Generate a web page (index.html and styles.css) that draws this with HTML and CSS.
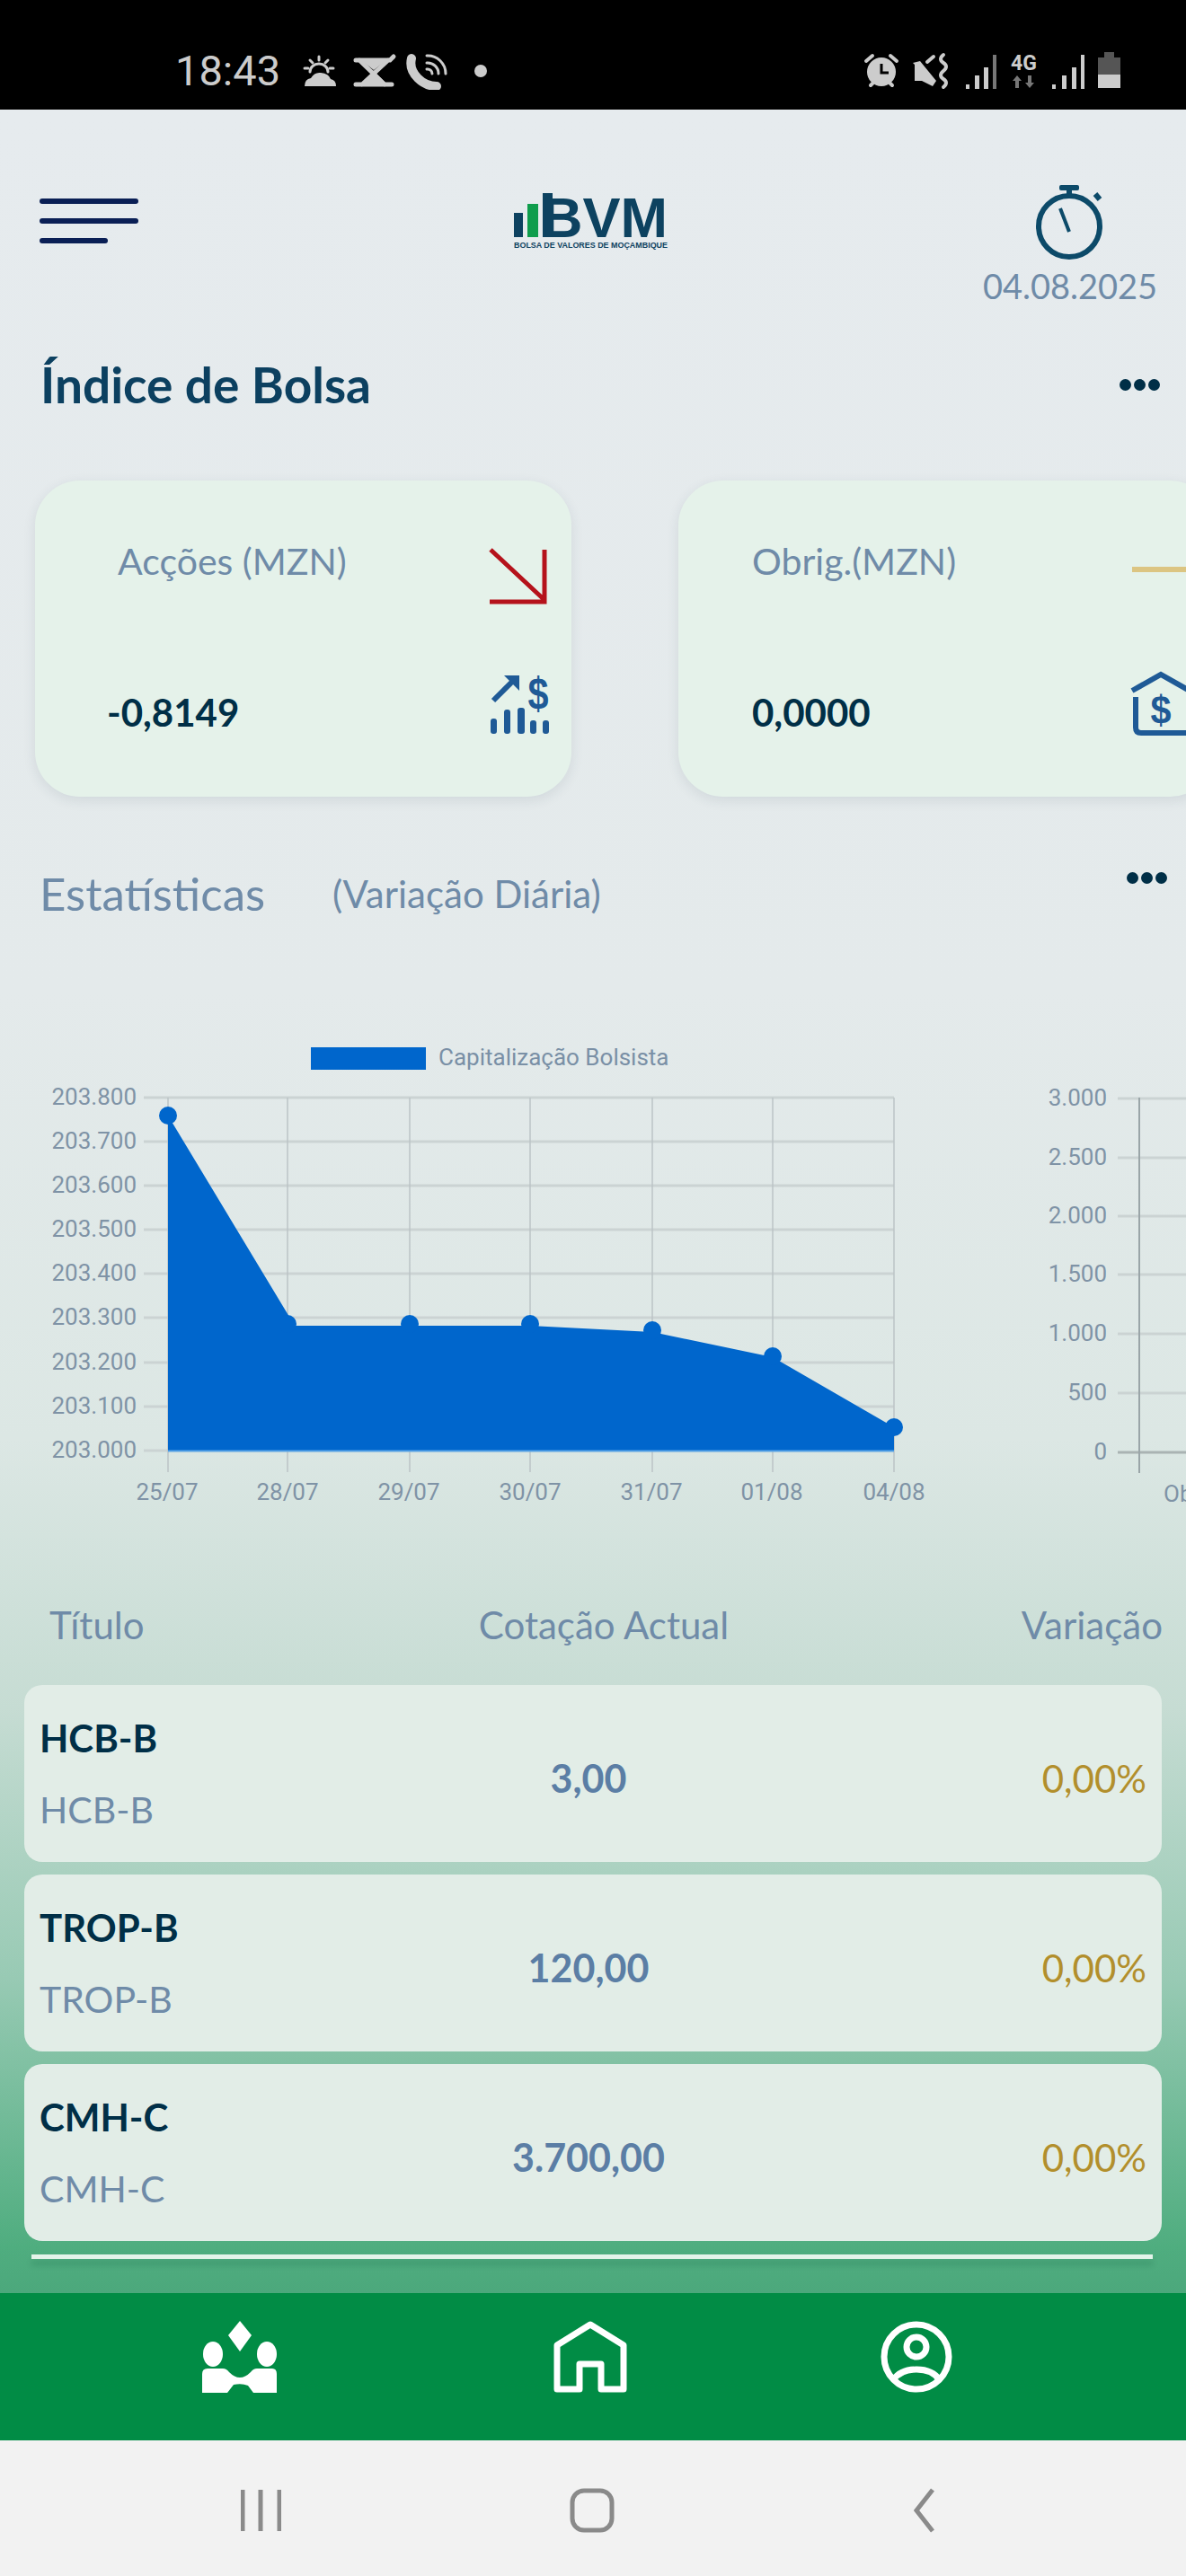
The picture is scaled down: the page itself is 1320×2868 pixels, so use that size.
FILE: index.html
```html
<!DOCTYPE html>
<html lang="pt">
  <head>
    <meta charset="UTF-8" />
    <meta name="viewport" content="width=device-width, initial-scale=1.0" />
    <title>BVM - Bolsa de Valores de Moçambique</title>
    <link rel="stylesheet" href="styles.css">
  </head>
  <body>
    <!-- Status bar -->
    <div class="status-bar">
      <div class="status-left">
        <span class="status-time">18:43</span>
        <svg class="status-icons-left" viewBox="0 0 206 42">
          <g class="st-stroke">
            <path d="M18 5v4M8 9l3 3M28 9l-3 3M2 18h4M34 18h-4" />
            <path d="M8 22a10 9 0 0 1 20 0" />
          </g>
          <path class="st-fill" d="M2 38q0-8 7-9 4-7 11-6 9 1 11 7 6 1 6 8z" />
          <path class="st-hour" d="M59 9h38l4-4M63 9l28 27M95 9L66 36M59 36h40" />
          <path class="st-fill" d="M79 21l15 15H64zM66 10h26L79 20z" />
          <path class="st-phone" d="M121 7q-3 12 7 22 9 9 21 9" />
          <g class="st-thin">
            <path d="M138 4a20 20 0 0 1 21 20" />
            <path d="M138 12a12 12 0 0 1 13 12" />
            <path d="M138 19a5 5 0 0 1 6 5" />
          </g>
          <circle class="st-fill" cx="198" cy="21" r="7" />
        </svg>
      </div>
      <svg class="status-icons-right" viewBox="0 0 287 42">
        <circle class="st-fill" cx="21" cy="22" r="16" />
        <path class="st-hand" d="M21 13v10h8" />
        <path class="st-ear" d="M4 10l7-6M38 10l-7-6M9 37l3-3M33 37l-3-3" />
        <path class="st-fill" d="M56 12l8-2 18 22-4 6-12-6H58V14z" />
        <path class="st-ear" d="M72 11l7-6M90 3q-6 5 0 9t0 9 0 9 0 9" />
        <rect class="st-fill" x="115" y="36" width="4" height="5" />
        <rect class="st-fill" x="125" y="26" width="5" height="15" />
        <rect class="st-fill" x="135" y="17" width="5" height="24" />
        <rect class="st-dim" x="145" y="3" width="4" height="38" />
        <text class="st-4g" x="165" y="20">4G</text>
        <path class="st-dim" d="M172 26l5 6h-3v8h-4v-8h-3zM186 40l-5-6h3v-8h4v8h3z" />
        <rect class="st-fill" x="211" y="36" width="4" height="5" />
        <rect class="st-fill" x="222" y="26" width="5" height="15" />
        <rect class="st-fill" x="233" y="17" width="5" height="24" />
        <rect class="st-fill" x="243" y="3" width="4" height="38" />
        <path class="st-batt" d="M262 25V6h7V0h11v6h7v19z" />
        <rect class="st-fill" x="262" y="25" width="25" height="15" />
      </svg>
    </div>

    <main class="app">
      <!-- Header -->
      <header class="top-bar">
        <div class="hamburger">
          <span></span>
          <span></span>
          <span class="short"></span>
        </div>
        <svg class="logo" viewBox="572 195 172 90">
          <rect class="logo-dark" x="572" y="237" width="10" height="27" />
          <rect class="logo-green" x="587" y="227" width="12" height="37" />
          <rect class="logo-dark" x="604" y="215" width="11" height="49" />
          <text class="logo-text" x="603" y="264">BVM</text>
          <text class="logo-sub" x="572" y="276" textLength="171" lengthAdjust="spacingAndGlyphs">BOLSA DE VALORES DE MOÇAMBIQUE</text>
        </svg>
        <div class="date-box">
          <svg class="stopwatch" viewBox="0 0 80 84">
            <rect class="sw-fill" x="28" y="0" width="22" height="6" rx="2" />
            <path class="sw-line" d="M39 6v6M68 10l5 6" />
            <circle class="sw-line" cx="39" cy="46" r="34" />
            <path class="sw-hand" d="M29 26l10 26" />
          </svg>
          <div class="date-text">04.08.2025</div>
        </div>
      </header>

      <div class="index-head">
        <h1 class="index-title">Índice de Bolsa</h1>
        <div class="dots"><span></span><span></span><span></span></div>
      </div>

      <!-- Index cards -->
      <section class="cards">
        <div class="card card-stock">
          <div class="card-row">
            <span class="card-label">Acções (MZN)</span>
            <svg class="card-icon" viewBox="0 0 70 70">
              <path class="trend-down" d="M3 7l60 56M63 7v58H2" />
            </svg>
          </div>
          <div class="card-row">
            <span class="card-value">-0,8149</span>
            <svg class="card-icon" viewBox="0 0 70 70">
              <path class="icon-line" d="M6 32L27 11" />
              <path class="icon-fill" d="M18 4h17v17z" />
              <text class="icon-dollar" x="56" y="41" textLength="23" lengthAdjust="spacingAndGlyphs">$</text>
              <rect class="icon-fill" x="3" y="52" width="7" height="17" rx="3" />
              <rect class="icon-fill" x="18" y="42" width="7" height="27" rx="3" />
              <rect class="icon-fill" x="33" y="40" width="8" height="29" rx="3" />
              <rect class="icon-fill" x="47" y="54" width="7" height="15" rx="3" />
              <rect class="icon-fill" x="61" y="54" width="7" height="15" rx="3" />
            </svg>
          </div>
        </div>
        <div class="card card-bond">
          <div class="card-row">
            <span class="card-label">Obrig.(MZN)</span>
            <svg class="card-icon" viewBox="0 0 70 70">
              <path class="trend-flat" d="M1 29h69" />
            </svg>
          </div>
          <div class="card-row">
            <span class="card-value">0,0000</span>
            <svg class="card-icon" viewBox="0 0 70 70">
              <path class="icon-line" d="M1 21L33 3l32 18M5 28v34q0 6 6 6h51q6 0 6-6V28" />
              <text class="icon-dollar icon-dollar-house" x="33" y="58" textLength="23" lengthAdjust="spacingAndGlyphs">$</text>
            </svg>
          </div>
        </div>
      </section>

      <div class="stats-head">
        <span class="stats-title">Estatísticas</span>
        <span class="stats-sub">(Variação Diária)</span>
        <div class="dots dots-stats"><span></span><span></span><span></span></div>
      </div>

      <!-- Charts -->
      <svg class="charts" viewBox="0 1140 1320 550">
        <rect class="area" x="346" y="1166" width="128" height="25" />
        <text class="legend" x="488" y="1186">Capitalização Bolsista</text>

        <path class="grid-h" d="M160 1222H995M160 1271H995M160 1320H995M160 1369H995M160 1418H995M160 1467H995M160 1517H995M160 1566H995M160 1615H995" />
        <path class="grid-v" d="M187 1222V1639M320 1222V1639M456 1222V1639M590 1222V1639M726 1222V1639M860 1222V1639M995 1222V1639" />

        <text class="tick tick-end" x="152" y="1230">203.800</text>
        <text class="tick tick-end" x="152" y="1279">203.700</text>
        <text class="tick tick-end" x="152" y="1328">203.600</text>
        <text class="tick tick-end" x="152" y="1377">203.500</text>
        <text class="tick tick-end" x="152" y="1426">203.400</text>
        <text class="tick tick-end" x="152" y="1475">203.300</text>
        <text class="tick tick-end" x="152" y="1525">203.200</text>
        <text class="tick tick-end" x="152" y="1574">203.100</text>
        <text class="tick tick-end" x="152" y="1623">203.000</text>

        <polygon class="area" points="187,1242 328,1476 590,1476 726,1483 860,1511 995,1589 995,1615 187,1615" />
        <path class="area-base" d="M187 1615.5H995" />
        <circle class="area" cx="187" cy="1242" r="10" />
        <circle class="area" cx="320" cy="1474" r="10" />
        <circle class="area" cx="456" cy="1474" r="10" />
        <circle class="area" cx="590" cy="1474" r="10" />
        <circle class="area" cx="726" cy="1481" r="10" />
        <circle class="area" cx="860" cy="1510" r="10" />
        <circle class="area" cx="995" cy="1589" r="10" />

        <text class="tick tick-mid" x="186" y="1670">25/07</text>
        <text class="tick tick-mid" x="320" y="1670">28/07</text>
        <text class="tick tick-mid" x="455" y="1670">29/07</text>
        <text class="tick tick-mid" x="590" y="1670">30/07</text>
        <text class="tick tick-mid" x="725" y="1670">31/07</text>
        <text class="tick tick-mid" x="859" y="1670">01/08</text>
        <text class="tick tick-mid" x="995" y="1670">04/08</text>

        <path class="grid-h" d="M1244 1223H1320M1244 1289H1320M1244 1354H1320M1244 1419H1320M1244 1485H1320M1244 1551H1320" />
        <path class="grid-zero" d="M1244 1617H1320" />
        <path class="axis-v" d="M1268 1222V1640" />
        <text class="tick tick-end" x="1232" y="1231">3.000</text>
        <text class="tick tick-end" x="1232" y="1297">2.500</text>
        <text class="tick tick-end" x="1232" y="1362">2.000</text>
        <text class="tick tick-end" x="1232" y="1427">1.500</text>
        <text class="tick tick-end" x="1232" y="1493">1.000</text>
        <text class="tick tick-end" x="1232" y="1559">500</text>
        <text class="tick tick-end" x="1232" y="1625">0</text>
        <text class="tick" x="1295" y="1672">Obrig.</text>
      </svg>

      <!-- Quotes table -->
      <div class="table-head">
        <span>Título</span>
        <span class="col-mid">Cotação Actual</span>
        <span class="col-end">Variação</span>
      </div>
      <div class="rows">
        <div class="row">
          <div class="row-name"><strong>HCB-B</strong><span>HCB-B</span></div>
          <div class="row-price">3,00</div>
          <div class="row-change">0,00%</div>
        </div>
        <div class="row">
          <div class="row-name"><strong>TROP-B</strong><span>TROP-B</span></div>
          <div class="row-price">120,00</div>
          <div class="row-change">0,00%</div>
        </div>
        <div class="row">
          <div class="row-name"><strong>CMH-C</strong><span>CMH-C</span></div>
          <div class="row-price">3.700,00</div>
          <div class="row-change">0,00%</div>
        </div>
      </div>
      <div class="row-next"></div>
    </main>

    <!-- Bottom menu -->
    <nav class="bottom-nav">
      <svg class="nav-icon" viewBox="225 2584 84 80">
        <path class="nav-fill" d="M267 2584l13 16-13 18-13-18z" />
        <ellipse class="nav-fill" cx="237" cy="2621" rx="11" ry="14" />
        <ellipse class="nav-fill" cx="297" cy="2621" rx="11" ry="14" />
        <path class="nav-fill" d="M225 2643q0-6 6-6h17q4 0 7 4 12 12 24 0 3-4 7-4h17q5 0 5 6v21h-26l-6-8q-7-3-16-1l-7 9h-28z" />
      </svg>
      <svg class="nav-icon" viewBox="616 2584 83 80">
        <path class="nav-line" d="M620 2660v-49l37-23 37 23v49h-25v-28h-24v28z" />
      </svg>
      <svg class="nav-icon" viewBox="979 2584 83 80">
        <circle class="nav-line" cx="1020" cy="2624" r="36" />
        <circle class="nav-line" cx="1020" cy="2613" r="11" />
        <path class="nav-line" d="M994 2650q8-12 26-12t26 12" />
      </svg>
    </nav>

    <!-- System navigation -->
    <div class="sys-nav">
      <svg class="sys-icon" viewBox="0 0 45 50">
        <path d="M2 2v46M22 2v46M43 2v46" />
      </svg>
      <svg class="sys-icon" viewBox="0 0 50 50">
        <rect x="3" y="3" width="44" height="44" rx="13" />
      </svg>
      <svg class="sys-icon" viewBox="0 0 23 50">
        <path d="M21 2L3 25l18 23" />
      </svg>
    </div>
  </body>
</html>
```

FILE: styles.css
```css
* {
  margin: 0;
  padding: 0;
  box-sizing: border-box;
}

:root {
  --dark: #0c4060;
  --navy: #002f47;
  --muted: #6f8ba8;
  --price: #5b7ea5;
  --gold: #b28f2c;
  --card: #e5f2ea;
  --green: #018c45;
}

body {
  width: 1320px;
  height: 2868px;
  overflow: hidden;
  font-family: "Lato", sans-serif;
  background: #f2f2f2;
}

svg {
  display: block;
}

/* Status bar */
.status-bar {
  height: 122px;
  background: #000;
  display: flex;
  justify-content: space-between;
  padding: 58px 73px 0 195px;
}

.status-left {
  display: flex;
  gap: 25px;
}

.status-time {
  font-family: "Roboto", sans-serif;
  font-size: 47px;
  line-height: 42px;
  color: #ccc;
  width: 117px;
}

.status-icons-left {
  width: 206px;
  height: 42px;
}

.status-icons-right {
  width: 287px;
  height: 42px;
}

.st-fill {
  fill: #ccc;
}

.st-dim {
  fill: #777;
}

.st-batt {
  fill: #555;
}

.st-stroke,
.st-thin,
.st-hour,
.st-phone,
.st-ear {
  fill: none;
  stroke: #ccc;
  stroke-linecap: round;
}

.st-stroke {
  stroke-width: 3;
}

.st-thin {
  stroke-width: 3;
}

.st-hour {
  stroke-width: 5;
}

.st-phone {
  stroke-width: 10;
}

.st-ear {
  stroke-width: 4;
}

.st-hand {
  fill: none;
  stroke: #000;
  stroke-width: 3;
}

.st-4g {
  font-family: "Roboto", sans-serif;
  font-weight: 700;
  font-size: 23px;
  fill: #ccc;
}

/* Page */
.app {
  height: 2431px;
  overflow: hidden;
  background: linear-gradient(
    180deg,
    #e6ebee 0,
    #e4eaeb 980px,
    #dce7e4 1480px,
    #c6dcd3 1780px,
    #98cab4 2080px,
    #4fad7f 2380px,
    #4ca87c 2431px
  );
}

.top-bar {
  height: 213px;
  padding: 84px 33px 0 44px;
  display: grid;
  grid-template-columns: 528px 172px 1fr;
  align-items: start;
}

.hamburger {
  margin-top: 15px;
  width: 110px;
  display: flex;
  flex-direction: column;
  gap: 16px;
}

.hamburger span {
  display: block;
  height: 6px;
  border-radius: 3px;
  background: #0a1f55;
}

.hamburger .short {
  width: 76px;
}

.logo {
  margin-top: -11px;
  width: 172px;
  height: 90px;
}

.logo-dark {
  fill: #0d4260;
}

.logo-green {
  fill: #0f9d4d;
}

.logo-text {
  font-family: "Liberation Sans", sans-serif;
  font-weight: 700;
  font-size: 63px;
  fill: #0d4260;
}

.logo-sub {
  font-family: "Liberation Sans", sans-serif;
  font-weight: 700;
  font-size: 9px;
  fill: #0d4260;
}

.date-box {
  justify-self: end;
  width: 192px;
  display: flex;
  flex-direction: column;
  align-items: center;
  gap: 8px;
}

.stopwatch {
  width: 80px;
  height: 84px;
}

.sw-fill {
  fill: #0c4a69;
}

.sw-line,
.sw-hand {
  fill: none;
  stroke: #0c4a69;
  stroke-width: 6;
}

.sw-hand {
  stroke-width: 4;
}

.date-text {
  font-size: 38px;
  line-height: 40px;
  color: #6f8ba8;
  white-space: nowrap;
}

.index-head {
  margin-top: 63px;
  padding: 0 29px 0 45px;
  height: 60px;
  display: flex;
  justify-content: space-between;
  align-items: center;
}

.index-title {
  font-size: 55px;
  line-height: 60px;
  font-weight: 700;
  color: var(--dark);
}

.dots {
  display: flex;
  gap: 3px;
}

.dots span {
  width: 13px;
  height: 13px;
  border-radius: 50%;
  background: var(--navy);
}

/* Cards */
.cards {
  margin-top: 77px;
  padding-left: 39px;
  display: flex;
  gap: 119px;
}

.card {
  flex-shrink: 0;
  width: 597px;
  height: 352px;
  padding: 70px 23px 0 80px;
  background: var(--card);
  border-radius: 50px;
  box-shadow: 0 4px 14px rgba(40, 60, 80, 0.1);
  display: flex;
  flex-direction: column;
  gap: 73px;
}

.card-bond {
  padding-left: 82px;
}

.card-row {
  height: 70px;
  display: flex;
  justify-content: space-between;
}

.card-label {
  font-size: 41px;
  line-height: 40px;
  color: var(--muted);
}

.card-stock .card-label {
  margin-left: 12px;
}

.card-value {
  align-self: flex-end;
  font-size: 42px;
  line-height: 50px;
  font-weight: 700;
  color: var(--navy);
}

.card-icon {
  flex-shrink: 0;
  width: 70px;
  height: 70px;
  overflow: visible;
}

.trend-down {
  fill: none;
  stroke: #b5121b;
  stroke-width: 5;
}

.trend-flat {
  fill: none;
  stroke: #dcc582;
  stroke-width: 6;
}

.icon-line {
  fill: none;
  stroke: #1f5a96;
  stroke-width: 6;
}

.icon-fill {
  fill: #1f5a96;
}

.icon-dollar {
  font-family: "Liberation Sans", sans-serif;
  font-weight: 700;
  font-size: 50px;
  text-anchor: middle;
  fill: #1f5a96;
}

.icon-dollar-house {
  font-size: 45px;
}

/* Statistics */
.stats-head {
  margin-top: 78px;
  padding-left: 44px;
  height: 60px;
  display: flex;
  align-items: center;
  position: relative;
}

.stats-title {
  font-size: 51px;
  line-height: 60px;
  color: var(--muted);
  width: 326px;
}

.stats-sub {
  font-size: 42px;
  line-height: 60px;
  color: var(--muted);
}

.dots-stats {
  position: absolute;
  top: 6px;
  right: 21px;
}

.charts {
  margin-top: 115px;
  width: 1320px;
  height: 550px;
}

.area {
  fill: #0066cc;
}

.area-base {
  stroke: #5aa5e8;
  stroke-width: 2;
}

.legend {
  font-family: "Roboto", sans-serif;
  font-size: 26px;
  fill: #7a90a6;
}

.tick {
  font-family: "Roboto", sans-serif;
  font-size: 26px;
  fill: #7f93a6;
}

.tick-end {
  text-anchor: end;
}

.tick-mid {
  text-anchor: middle;
}

.grid-h {
  stroke: #cbd3d3;
  stroke-width: 3;
}

.grid-v {
  stroke: #bcc4c6;
  stroke-width: 1.5;
}

.grid-zero {
  stroke: #aab3b3;
  stroke-width: 3;
}

.axis-v {
  stroke: #9aa5a8;
  stroke-width: 2;
}

/* Table */
.table-head {
  margin-top: 94px;
  padding: 0 26px 0 55px;
  height: 52px;
  display: grid;
  grid-template-columns: 456px 322px 1fr;
  font-size: 42px;
  line-height: 50px;
  color: var(--muted);
}

.col-mid {
  text-align: center;
}

.col-end {
  text-align: right;
}

.rows {
  margin-top: 40px;
  padding: 0 27px;
  display: flex;
  flex-direction: column;
  gap: 14px;
}

.row {
  height: 197px;
  padding: 0 17px;
  background: #e2ede7;
  border-radius: 20px;
  display: grid;
  grid-template-columns: 425px 372px 1fr;
  align-items: center;
}

.row-name {
  display: flex;
  flex-direction: column;
  gap: 30px;
  font-size: 41px;
  line-height: 50px;
}

.row-name strong {
  font-size: 42px;
  color: var(--navy);
}

.row-name span {
  color: var(--muted);
}

.row-price {
  padding-top: 10px;
  text-align: center;
  font-size: 43px;
  font-weight: 700;
  color: var(--price);
}

.row-change {
  padding-top: 10px;
  text-align: right;
  font-size: 42px;
  color: var(--gold);
}

.row-next {
  margin: 15px 37px 0 35px;
  height: 5px;
  background: #e4f4ea;
  box-shadow: 0 7px 6px rgba(0, 80, 50, 0.2);
}

/* Bottom menu */
.bottom-nav {
  height: 164px;
  padding: 31px 0 0 225px;
  background: var(--green);
  display: grid;
  grid-template-columns: 391px 363px 1fr;
  align-items: start;
}

.nav-icon {
  height: 80px;
}

.nav-fill {
  fill: #fff;
}

.nav-line {
  fill: none;
  stroke: #fff;
  stroke-width: 7;
  stroke-linejoin: round;
}

/* System navigation */
.sys-nav {
  height: 151px;
  padding: 53px 0 0 268px;
  background: #f2f2f2;
  display: grid;
  grid-template-columns: 366px 383px 1fr;
  align-items: start;
}

.sys-icon {
  height: 50px;
}

.sys-icon path,
.sys-icon rect {
  fill: none;
  stroke: #8a8a8a;
  stroke-width: 5;
}
```
